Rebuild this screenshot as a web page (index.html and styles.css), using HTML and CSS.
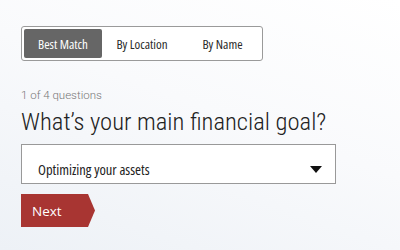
FILE: index.html
```
<!DOCTYPE html>
<html>
<head>
<meta charset="utf-8">
<link rel="stylesheet" href="styles.css">
</head>
<body>
<div class="page">
  <div class="tabs">
    <div class="tab active">Best Match</div>
    <div class="tab">By Location</div>
    <div class="tab">By Name</div>
  </div>
  <div class="progress">1 of 4 questions</div>
  <h1 class="question">What’s your main financial goal?</h1>
  <div class="select">
    <span class="select-text">Optimizing your assets</span>
    <span class="caret"></span>
  </div>
  <div class="next">Next</div>
</div>
</body>
</html>
```
FILE: styles.css
```
html, body { margin: 0; }
body {
  width: 400px; height: 250px; overflow: hidden;
  background: linear-gradient(200deg, #ffffff 0%, #f9fafc 45%, #edf1f6 100%);
  font-family: "Open Sans", sans-serif;
  color: #222;
}
.page { padding: 26px 0 0 21px; }
.tabs {
  display: flex; width: 236px; height: 29px; padding: 2px;
  border: 1px solid #9a9a9a; border-radius: 3px; background: #fff;
}
.tab {
  flex: 0 0 auto; display: flex; align-items: center; justify-content: center;
  font-size: 13px; font-weight: 400; font-stretch: 75%; color: #2a2a2a;
  padding-top: 1px; box-sizing: border-box;
}
.tab:nth-child(1) { width: 78px; }
.tab:nth-child(2) { width: 80px; }
.tab:nth-child(3) { width: 78px; padding-left: 3px; }
.tab.active { background: #666666; color: #fff; border-radius: 2px; }
.progress {
  margin-top: 26px; font-family: Roboto, sans-serif; font-size: 11.5px; line-height: 16px;
  font-weight: 300; color: #777;
}
.question {
  margin: 4px 0 0; font-family: Roboto, sans-serif; font-size: 24.6px; line-height: 30px;
  font-weight: 300; font-stretch: 75%; color: #222; white-space: nowrap;
}
.select {
  margin-top: 7px; width: 315px; height: 40px; box-sizing: border-box;
  border: 1px solid #999; background: #fff;
  display: flex; align-items: center; justify-content: space-between;
  padding: 11px 13px 0 16px;
}
.select-text { font-size: 14.5px; line-height: 20px; font-stretch: 75%; color: #222; }
.caret {
  width: 0; height: 0; margin-top: -1px;
  border-left: 6px solid transparent; border-right: 6px solid transparent; border-top: 7px solid #111;
}
.next {
  margin-top: 10px; width: 74px; height: 33px; box-sizing: border-box;
  background: #a83532; color: #fff; font-size: 13.5px; line-height: 20px;
  display: flex; align-items: center; padding-left: 11px;
  clip-path: polygon(0 0, 67px 0, 74px 50%, 67px 100%, 0 100%);
}
```
